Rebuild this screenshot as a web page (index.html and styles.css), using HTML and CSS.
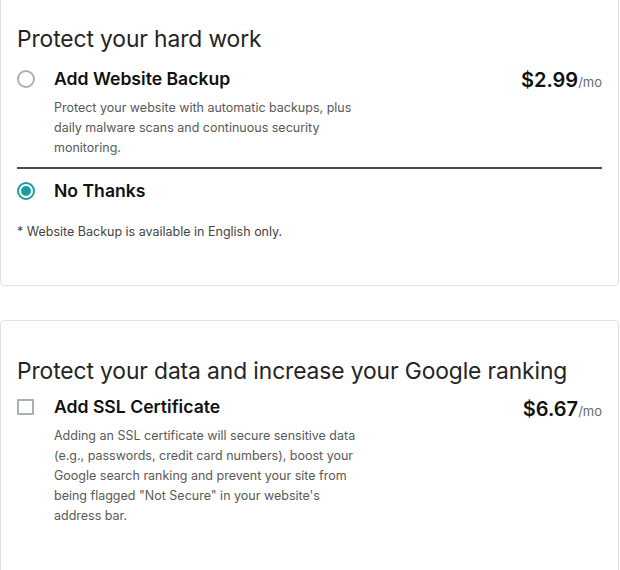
FILE: index.html
```html
<!DOCTYPE html>
<html lang="en">
<head>
<meta charset="utf-8">
<title>Add-ons</title>
<link rel="stylesheet" href="styles.css">
</head>
<body>
<section class="card card-first">
  <h2 class="card-title">Protect your hard work</h2>
  <div class="option">
    <span class="radio"></span>
    <div class="option-body">
      <div class="option-name">Add Website Backup</div>
      <p class="option-desc">Protect your website with automatic backups, plus daily malware scans and continuous security monitoring.</p>
    </div>
    <div class="price"><span class="amount">$2.99</span><span class="per">/mo</span></div>
  </div>
  <hr class="divider">
  <div class="option option-no">
    <span class="radio radio-on"></span>
    <div class="option-body">
      <div class="option-name">No Thanks</div>
    </div>
  </div>
  <p class="note">* Website Backup is available in English only.</p>
</section>

<section class="card card-second">
  <h2 class="card-title">Protect your data and increase your Google ranking</h2>
  <div class="option">
    <span class="checkbox"></span>
    <div class="option-body">
      <div class="option-name">Add SSL Certificate</div>
      <p class="option-desc">Adding an SSL certificate will secure sensitive data (e.g., passwords, credit card numbers), boost your Google search ranking and prevent your site from being flagged "Not Secure" in your website's address bar.</p>
    </div>
    <div class="price price-low"><span class="amount">$6.67</span><span class="per">/mo</span></div>
  </div>
</section>
</body>
</html>
```

FILE: styles.css
```css
* { box-sizing: border-box; }

body {
  margin: 0;
  background: #ffffff;
  font-family: Inter, "Noto Sans", "Liberation Sans", sans-serif;
  color: #111111;
  overflow: hidden;
}

.card {
  width: 619px;
  background: #ffffff;
  border: 1px solid #e2e2e2;
  border-radius: 4px;
  padding: 0 16px 0 16px;
}

.card-first {
  margin-top: -20px;
  padding-top: 43px;
  height: 306px;
}

.card-second {
  margin-top: 34px;
  padding-top: 35px;
  height: 290px;
}

.card-title {
  margin: 0;
  font-weight: 400;
  font-size: 22.8px;
  line-height: 30px;
  color: #242424;
  letter-spacing: -0.1px;
}

.option {
  display: grid;
  grid-template-columns: 37px 1fr auto;
  align-items: start;
  margin-top: 12px;
}

.card-second .option {
  margin-top: 8px;
}

.option-name {
  font-weight: 600;
  font-size: 17.6px;
  line-height: 26px;
  color: #111111;
}

.option-desc {
  margin: 6px 0 0;
  width: 312px;
  font-size: 12.5px;
  line-height: 20px;
  color: #595959;
}

.radio {
  display: block;
  width: 18px;
  height: 18px;
  margin-top: 4px;
  border: 2px solid #a9b1b7;
  border-radius: 50%;
  position: relative;
}

.radio-on {
  border-color: #1b9ea1;
}

.radio-on::after {
  content: "";
  position: absolute;
  left: 2px;
  top: 2px;
  width: 10px;
  height: 10px;
  border-radius: 50%;
  background: #1b9ea1;
}

.checkbox {
  display: block;
  width: 17px;
  height: 16px;
  margin-top: 5px;
  border: 2px solid #a9b1b7;
  border-radius: 1px;
}

.price {
  padding-top: 2px;
  white-space: nowrap;
}

.price-low {
  padding-top: 3px;
}

.amount {
  font-weight: 600;
  font-size: 20px;
  color: #111111;
}

.per {
  font-size: 13px;
  color: #6b6b6b;
}

.divider {
  margin: 9px 0 0;
  border: 0;
  height: 2px;
  background: #4a4a4a;
}

.option-no {
  margin-top: 9px;
}

.note {
  margin: 20px 0 0;
  font-size: 12.5px;
  line-height: 16px;
  color: #444444;
}
```
